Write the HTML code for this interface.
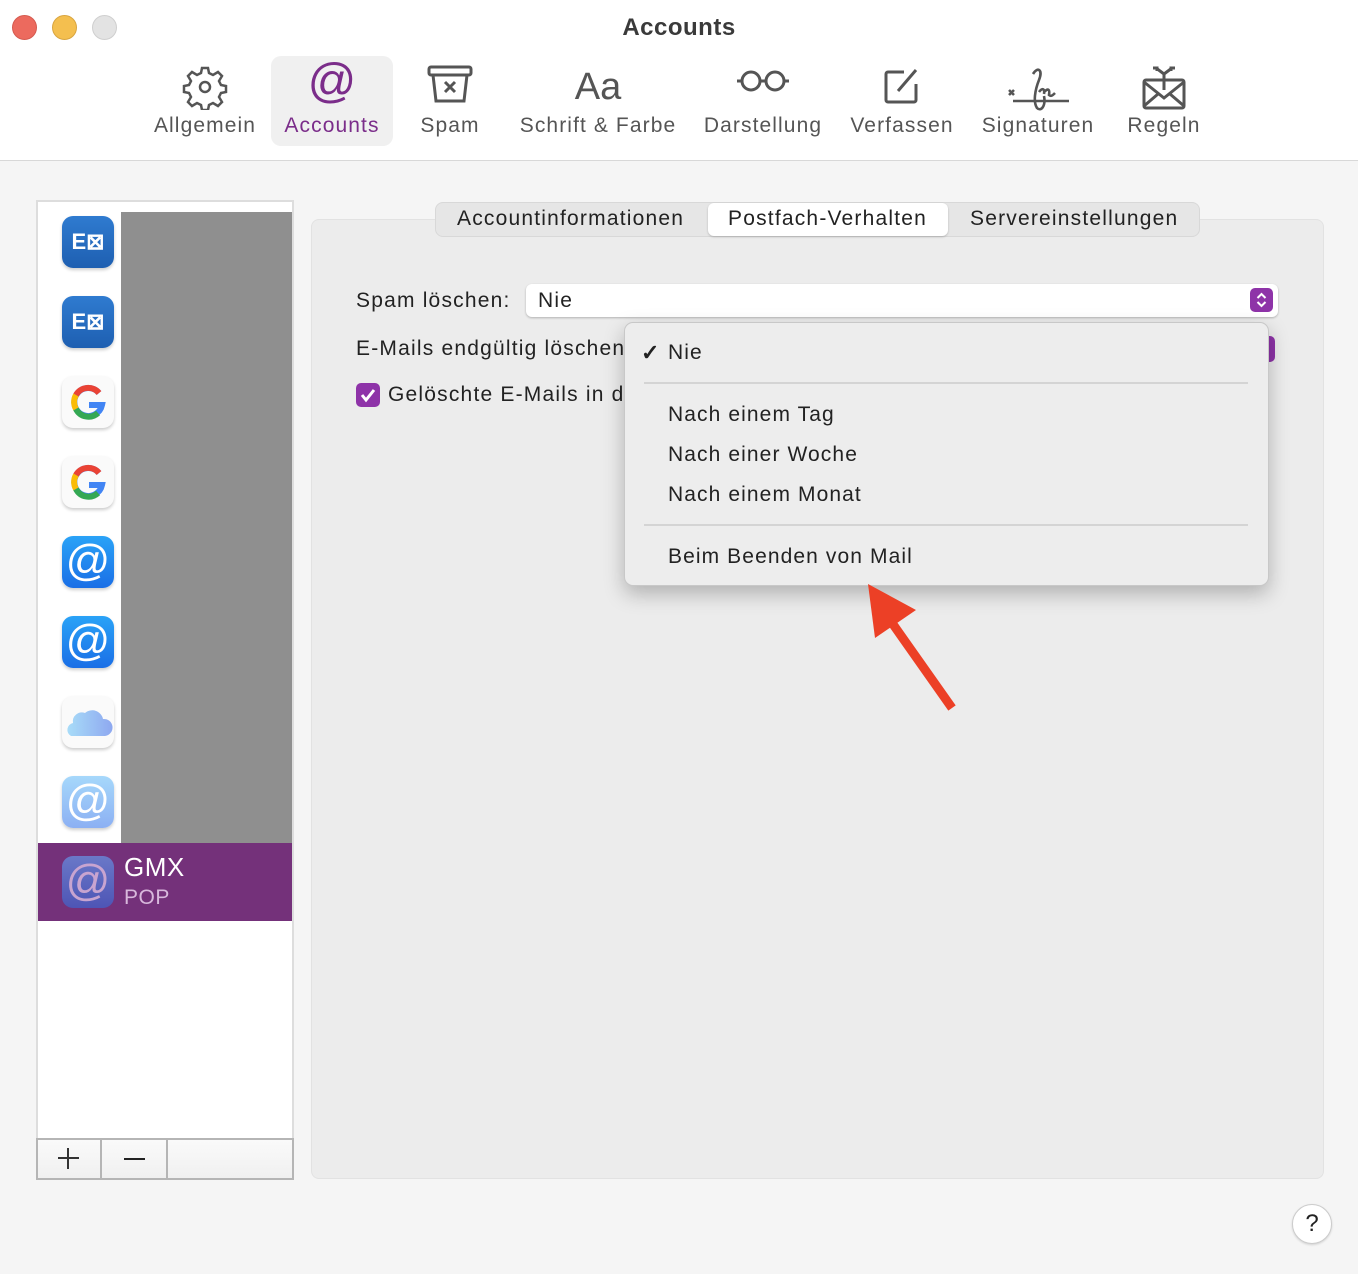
<!DOCTYPE html>
<html><head><meta charset="utf-8"><style>
*{margin:0;padding:0;box-sizing:border-box}
body{width:1358px;height:1274px;background:#f5f5f5;font-family:"Liberation Sans",sans-serif;position:relative;overflow:hidden;color:#222}
.abs{position:absolute}
#top{left:0;top:0;width:1358px;height:161px;background:#fff;border-bottom:1px solid #d8d8d8}
.dot{width:25px;height:25px;border-radius:50%;top:15px}
.tb{top:56px;height:90px;text-align:center;font-size:21px;color:#555;letter-spacing:1.1px}
.tb .l{position:absolute;bottom:8px;left:-20px;right:-20px;white-space:nowrap}
.tb svg{position:absolute;left:50%;top:8px;transform:translateX(-50%)}
.ic{left:62px;width:52px;height:52px;border-radius:11px;box-shadow:0 2px 3px rgba(0,0,0,.2)}
.at{color:#fff;font-size:44px;line-height:50px;text-align:center;font-weight:normal}
.lbl{font-size:21px;color:#222;letter-spacing:1.2px;white-space:nowrap}
.mi{left:668px;font-size:21px;color:#222;letter-spacing:1.1px}
</style></head><body>
<div id="top" class="abs"></div>
<div class="abs dot" style="left:12px;background:#ec6a5e;border:1px solid #d55a4f"></div>
<div class="abs dot" style="left:52px;background:#f4bf4f;border:1px solid #d9a53f"></div>
<div class="abs dot" style="left:92px;background:#e3e3e3;border:1px solid #cfcfcf"></div>
<div class="abs" style="left:0;width:1358px;top:14px;text-align:center;font-size:24px;font-weight:bold;color:#3a3a3a;letter-spacing:0.5px">Accounts</div>

<div class="abs tb" style="left:146px;width:118px"><svg width="46" height="46" viewBox="0 0 46 46" fill="none" stroke="#555" stroke-width="2.5"><path d="M20 4h6l1 5 4 2 5-3 4 4-3 5 2 4 5 1v6l-5 1-2 4 3 5-4 4-5-3-4 2-1 5h-6l-1-5-4-2-5 3-4-4 3-5-2-4-5-1v-6l5-1 2-4-3-5 4-4 5 3 4-2z"/><circle cx="23" cy="23" r="5"/></svg><div class="l">Allgemein</div></div>
<div class="abs tb" style="left:271px;width:122px;background:#f0f0f0;border-radius:10px;color:#7b2d8a"><div style="position:absolute;left:0;right:0;top:-2px;font-size:48px;color:#7b2d8a;letter-spacing:0">@</div><div class="l">Accounts</div></div>
<div class="abs tb" style="left:405px;width:90px"><svg width="48" height="40" viewBox="0 0 48 40" fill="none" stroke="#555" stroke-width="3"><rect x="3" y="3" width="42" height="8" rx="2"/><path d="M7 11l3 26h28l3-26M19 18l10 10M29 18l-10 10"/></svg><div class="l">Spam</div></div>
<div class="abs tb" style="left:510px;width:176px"><div style="position:absolute;left:0;right:0;top:10px;font-size:38px;color:#555;letter-spacing:0">Aa</div><div class="l">Schrift &amp; Farbe</div></div>
<div class="abs tb" style="left:700px;width:126px"><svg width="58" height="30" viewBox="0 0 58 30" fill="none" stroke="#555" stroke-width="3"><circle cx="17" cy="17" r="9"/><circle cx="41" cy="17" r="9"/><path d="M26 17h6M3 17h5M50 17h5"/></svg><div class="l">Darstellung</div></div>
<div class="abs tb" style="left:846px;width:112px"><svg width="44" height="44" viewBox="0 0 44 44" fill="none" stroke="#555" stroke-width="3"><path d="M24 8H8a2 2 0 0 0-2 2v26a2 2 0 0 0 2 2h26a2 2 0 0 0 2-2V20"/><path d="M18 27l18-21"/></svg><div class="l">Verfassen</div></div>
<div class="abs tb" style="left:978px;width:120px"><svg width="62" height="48" viewBox="0 0 62 48" fill="none" stroke="#555" stroke-width="2.6"><path d="M2 26l5 5M7 26l-5 5M6 37h56M26 10c5-8 10-4 6 6-4 10-6 22-2 28 4 4 9-2 7-12M32 28c3-4 6-4 5 2M37 28c4-4 6-3 5 3 2 2 4 0 6-2"/></svg><div class="l">Signaturen</div></div>
<div class="abs tb" style="left:1116px;width:96px"><svg width="48" height="48" viewBox="0 0 48 48" fill="none" stroke="#555" stroke-width="3"><rect x="4" y="16" width="40" height="28" rx="2"/><path d="M4 18l20 16 20-16M4 42l14-12M44 42l-14-12M24 26V10M24 10l-8-6M24 10l8-6M13 4h4v3M35 4h-4v3"/></svg><div class="l">Regeln</div></div>

<!-- sidebar -->
<div class="abs" style="left:36px;top:200px;width:258px;height:980px;background:#fff;border:2px solid #ddd"></div>
<div class="abs" style="left:121px;top:212px;width:171px;height:631px;background:#8f8f8f"></div>
<div class="abs ic" style="top:216px;background:linear-gradient(#2f7bd0,#1e5fb1);color:#fff;font-weight:bold;font-size:22px;line-height:52px;text-align:center">E⊠</div>
<div class="abs ic" style="top:296px;background:linear-gradient(#2f7bd0,#1e5fb1);color:#fff;font-weight:bold;font-size:22px;line-height:52px;text-align:center">E⊠</div>
<div class="abs ic" style="top:376px;background:#fafafa"><svg width="52" height="52" viewBox="0 0 52 52"><path d="M37 17a14 14 0 1 0 3 12H27" fill="none" stroke="#4285f4" stroke-width="6"/><path d="M37 17a14 14 0 0 0-23 2" fill="none" stroke="#ea4335" stroke-width="6"/><path d="M14 19a14 14 0 0 0 0 14" fill="none" stroke="#fbbc05" stroke-width="6"/><path d="M14 33a14 14 0 0 0 22 4" fill="none" stroke="#34a853" stroke-width="6"/></svg></div>
<div class="abs ic" style="top:456px;background:#fafafa"><svg width="52" height="52" viewBox="0 0 52 52"><path d="M37 17a14 14 0 1 0 3 12H27" fill="none" stroke="#4285f4" stroke-width="6"/><path d="M37 17a14 14 0 0 0-23 2" fill="none" stroke="#ea4335" stroke-width="6"/><path d="M14 19a14 14 0 0 0 0 14" fill="none" stroke="#fbbc05" stroke-width="6"/><path d="M14 33a14 14 0 0 0 22 4" fill="none" stroke="#34a853" stroke-width="6"/></svg></div>
<div class="abs ic at" style="top:536px;background:linear-gradient(#2aa3f7,#1a6fe6)">@</div>
<div class="abs ic at" style="top:616px;background:linear-gradient(#2aa3f7,#1a6fe6)">@</div>
<div class="abs ic" style="top:696px;background:#fafafa"><svg width="52" height="52" viewBox="0 0 52 52"><defs><linearGradient id="c" x1="0" x2="1"><stop offset="0" stop-color="#a8dcf8"/><stop offset="1" stop-color="#8ea8f0"/></linearGradient></defs><path d="M9 40a7 7 0 0 1 2-13 9 9 0 0 1 12-10 11 11 0 0 1 18 6 7 7 0 0 1 2 17z" fill="url(#c)"/></svg></div>
<div class="abs ic at" style="top:776px;background:linear-gradient(#a6d8fb,#8cb0f3)">@</div>
<div class="abs" style="left:38px;top:843px;width:254px;height:78px;background:#74317a"></div>
<div class="abs ic at" style="top:856px;background:linear-gradient(#6a78c8,#4e55b5);color:#c8a4d0;box-shadow:none">@</div>
<div class="abs" style="left:124px;top:852px;color:#fff;font-size:26px;letter-spacing:0.5px">GMX</div>
<div class="abs" style="left:124px;top:886px;color:#d8b8dc;font-size:21px;letter-spacing:0.5px">POP</div>
<div class="abs" style="left:36px;top:1138px;width:258px;height:42px;border:2px solid #b5b5b5;background:linear-gradient(#fafafa,#f0f0f0)"></div>
<div class="abs" style="left:100px;top:1138px;width:2px;height:42px;background:#b5b5b5"></div>
<div class="abs" style="left:166px;top:1138px;width:2px;height:42px;background:#b5b5b5"></div>
<div class="abs" style="left:58px;top:1157px;width:21px;height:2px;background:#333"></div>
<div class="abs" style="left:67px;top:1148px;width:2px;height:21px;background:#333"></div>
<div class="abs" style="left:124px;top:1158px;width:21px;height:2px;background:#222"></div>

<!-- panel -->
<div class="abs" style="left:311px;top:219px;width:1013px;height:960px;background:#ececec;border:1px solid #e2e2e2;border-radius:8px"></div>
<div class="abs" style="left:435px;top:202px;width:765px;height:35px;background:#e6e6e6;border:1px solid #d8d8d8;border-radius:8px"></div>
<div class="abs" style="left:708px;top:203px;width:240px;height:33px;background:#fff;border-radius:6px;box-shadow:0 1px 2px rgba(0,0,0,.2)"></div>
<div class="abs lbl" style="left:457px;top:207px">Accountinformationen</div>
<div class="abs lbl" style="left:728px;top:207px">Postfach-Verhalten</div>
<div class="abs lbl" style="left:970px;top:207px">Servereinstellungen</div>

<div class="abs lbl" style="left:356px;top:289px">Spam löschen:</div>
<div class="abs" style="left:526px;top:284px;width:752px;height:33px;background:#fff;border-radius:6px;box-shadow:0 1px 2px rgba(0,0,0,.25)"></div>
<div class="abs lbl" style="left:538px;top:289px">Nie</div>
<div class="abs" style="left:1250px;top:288px;width:23px;height:24px;background:#8e33a8;border-radius:5px"><svg width="23" height="24"><path d="M7.5 10l4-4 4 4M7.5 14l4 4 4-4" stroke="#fff" stroke-width="2" fill="none"/></svg></div>
<div class="abs" style="left:1250px;top:336px;width:25px;height:26px;background:#8e33a8;border-radius:5px"></div>
<div class="abs lbl" style="left:356px;top:337px">E-Mails endgültig löschen</div>
<div class="abs" style="left:356px;top:383px;width:24px;height:24px;background:#8e33a8;border-radius:5px"><svg width="24" height="24"><path d="M6 12l4 5 8-10" stroke="#fff" stroke-width="3" fill="none"/></svg></div>
<div class="abs lbl" style="left:388px;top:383px">Gelöschte E-Mails in d</div>

<!-- popup -->
<div class="abs" style="left:624px;top:322px;width:645px;height:264px;background:#ededed;border:1px solid #c8c8c8;border-radius:9px;box-shadow:0 8px 20px rgba(0,0,0,.25)"></div>
<div class="abs" style="left:641px;top:340px;font-size:22px;font-weight:bold">✓</div>
<div class="abs mi" style="top:341px">Nie</div>
<div class="abs" style="left:644px;top:382px;width:604px;height:2px;background:#d4d4d4"></div>
<div class="abs mi" style="top:403px">Nach einem Tag</div>
<div class="abs mi" style="top:443px">Nach einer Woche</div>
<div class="abs mi" style="top:483px">Nach einem Monat</div>
<div class="abs" style="left:644px;top:524px;width:604px;height:2px;background:#d4d4d4"></div>
<div class="abs mi" style="top:545px">Beim Beenden von Mail</div>

<svg class="abs" style="left:0;top:0" width="1358" height="1274"><path d="M868 584L875 638L916 610Z" fill="#ec4026"/><path d="M890 620L952 708" stroke="#ec4026" stroke-width="9"/></svg>

<div class="abs" style="left:1292px;top:1204px;width:40px;height:40px;border-radius:50%;background:#fff;border:1px solid #ccc;box-shadow:0 1px 2px rgba(0,0,0,.15);text-align:center;font-size:24px;line-height:38px;color:#222">?</div>
</body></html>
